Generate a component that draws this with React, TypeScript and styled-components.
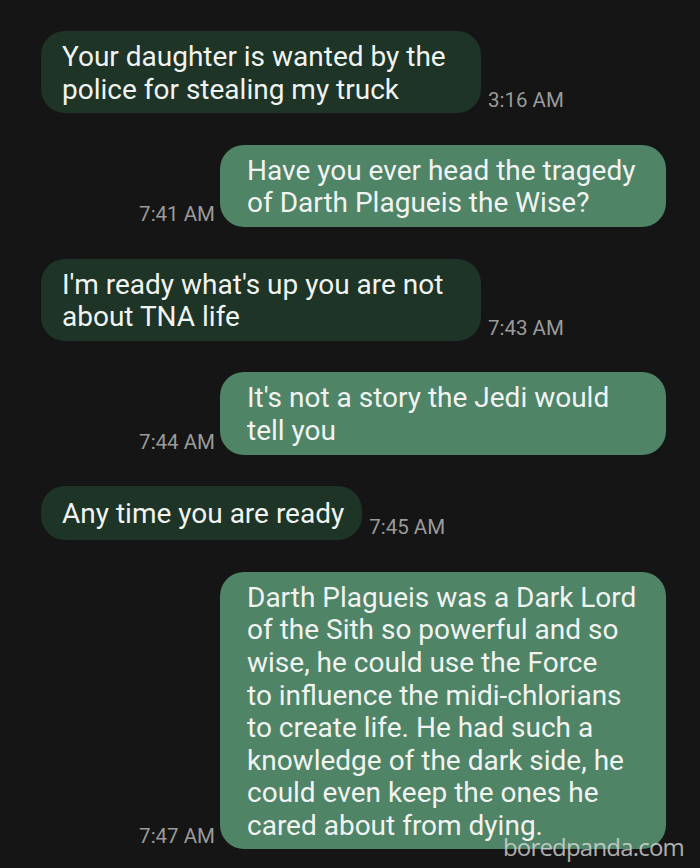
import styled, { createGlobalStyle } from 'styled-components';

const GlobalStyle = createGlobalStyle`
  html, body {
    margin: 0;
    padding: 0;
    background: #151515;
  }
`;

type Message = {
  id: number;
  mine: boolean;
  time: string;
  text: string;
};

const messages: Message[] = [
  { id: 1, mine: false, time: '3:16 AM', text: 'Your daughter is wanted by the\npolice for stealing my truck' },
  { id: 2, mine: true, time: '7:41 AM', text: 'Have you ever head the tragedy\nof Darth Plagueis the Wise?' },
  { id: 3, mine: false, time: '7:43 AM', text: "I'm ready what's up you are not\nabout TNA life" },
  { id: 4, mine: true, time: '7:44 AM', text: "It's not a story the Jedi would\ntell you" },
  { id: 5, mine: false, time: '7:45 AM', text: 'Any time you are ready' },
  {
    id: 6,
    mine: true,
    time: '7:47 AM',
    text:
      'Darth Plagueis was a Dark Lord\nof the Sith so powerful and so\nwise, he could use the Force\nto influence the midi-chlorians\nto create life. He had such a\nknowledge of the dark side, he\ncould even keep the ones he\ncared about from dying.',
  },
];

const Screen = styled.div`
  position: relative;
  width: 700px;
  height: 868px;
  overflow: hidden;
  background: #151515;
  font-family: Roboto, 'Liberation Sans', sans-serif;
  box-sizing: border-box;
  padding: 31px 34px 0 41px;
  display: flex;
  flex-direction: column;
  gap: 31.6px;
`;

const Row = styled.div<{ $mine: boolean }>`
  display: flex;
  flex-direction: ${(p) => (p.$mine ? 'row-reverse' : 'row')};
  align-items: flex-end;
  justify-content: flex-start;
  gap: ${(p) => (p.$mine ? '5px' : '7px')};
`;

const Bubble = styled.div<{ $mine: boolean }>`
  box-sizing: border-box;
  display: flex;
  align-items: center;
  min-height: 54px;
  max-width: ${(p) => (p.$mine ? '446px' : '440px')};
  min-width: ${(p) => (p.$mine ? '446px' : '0')};
  padding: 10px 18px 7px ${(p) => (p.$mine ? '27px' : '21px')};
  border-radius: 24px;
  background: ${(p) => (p.$mine ? '#4f8467' : '#1d3427')};
  color: #f1f3f1;
  font-size: 28px;
  line-height: 32.6px;
  white-space: pre-line;
`;

const Wide = styled(Bubble)`
  min-width: 440px;
`;

const Time = styled.span`
  color: #9b9b9b;
  font-size: 20.5px;
  line-height: 24px;
  margin-bottom: 1px;
  white-space: nowrap;
`;

const Watermark = styled.div`
  position: absolute;
  right: 16px;
  bottom: 5px;
  font-family: 'Open Sans', 'DejaVu Sans', sans-serif;
  font-size: 24px;
  letter-spacing: -0.8px;
  color: rgba(225, 225, 225, 0.75);
`;

export default function App() {
  return (
    <>
      <GlobalStyle />
      <Screen>
        {messages.map((m) => {
          const Box = !m.mine && m.text.includes('\n') ? Wide : Bubble;
          return (
            <Row key={m.id} $mine={m.mine}>
              <Box $mine={m.mine}>{m.text}</Box>
              <Time>{m.time}</Time>
            </Row>
          );
        })}
        <Watermark>boredpanda.com</Watermark>
      </Screen>
    </>
  );
}
